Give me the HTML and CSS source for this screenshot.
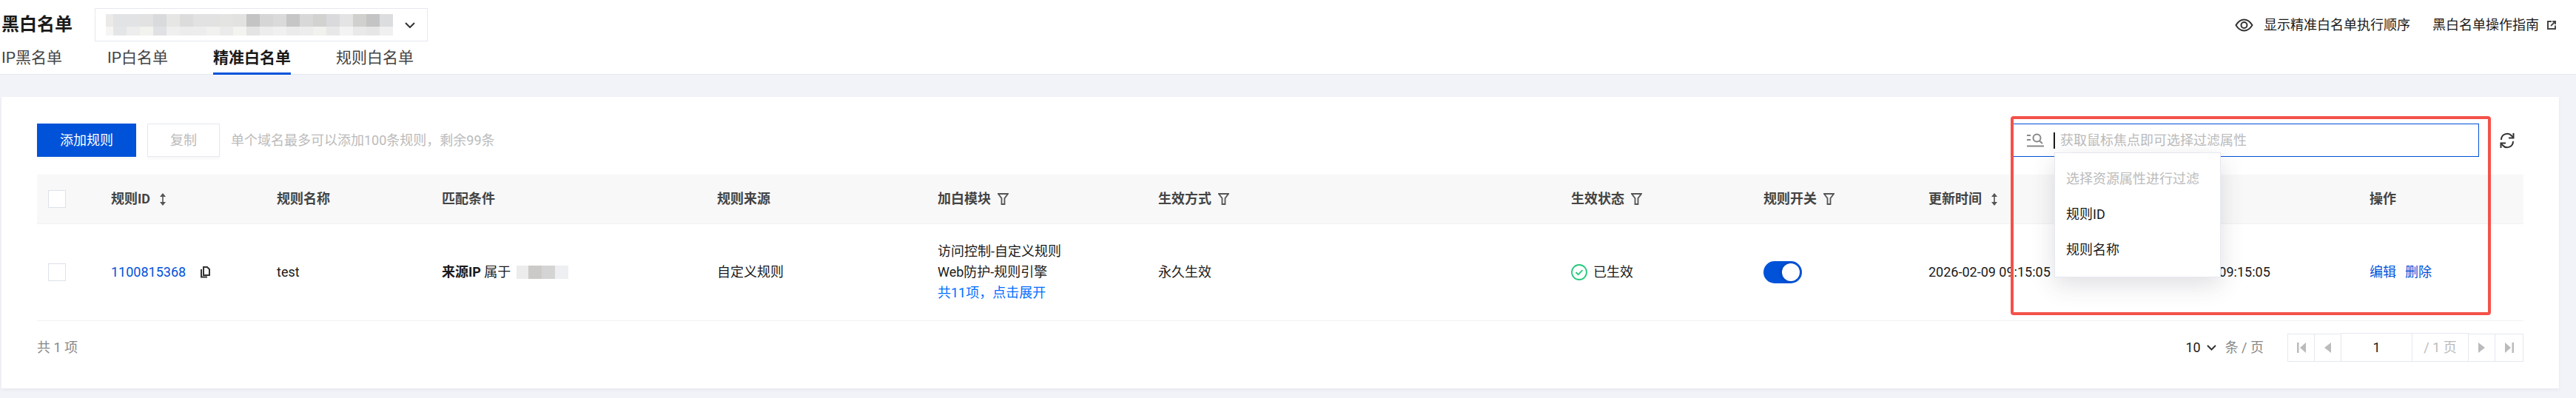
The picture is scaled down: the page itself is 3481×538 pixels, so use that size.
FILE: index.html
```html
<!DOCTYPE html>
<html lang="zh-CN">
<head>
  <meta charset="UTF-8">
  <meta name="viewport" content="width=device-width, initial-scale=1.0">
  <title>黑白名单</title>
  <link rel="stylesheet" href="styles.css">
</head>
<body>
  <header class="page-head">
    <div class="head-left">
      <div class="title-row">
        <h1 class="page-title">黑白名单</h1>
        <div class="domain-select">
          <svg class="mosaic" width="388" height="29" viewBox="0 0 388 29">
            <g shape-rendering="crispEdges">
              <rect x="0" y="0" width="10" height="17" fill="#ebeae8"/><rect x="10" y="0" width="18" height="17" fill="#e2e3e5"/><rect x="28" y="0" width="18" height="17" fill="#e2e3e5"/><rect x="46" y="0" width="18" height="17" fill="#e2e2e3"/><rect x="64" y="0" width="18" height="17" fill="#d9dadc"/><rect x="82" y="0" width="18" height="17" fill="#e6e6e4"/><rect x="100" y="0" width="18" height="17" fill="#dcdcdc"/><rect x="118" y="0" width="18" height="17" fill="#e2e2e2"/><rect x="136" y="0" width="18" height="17" fill="#e2e2e2"/><rect x="154" y="0" width="18" height="17" fill="#e4e4e3"/><rect x="172" y="0" width="18" height="17" fill="#e2e2e0"/><rect x="190" y="0" width="18" height="17" fill="#c4c4c4"/><rect x="208" y="0" width="18" height="17" fill="#d6d6d6"/><rect x="226" y="0" width="18" height="17" fill="#dadada"/><rect x="244" y="0" width="18" height="17" fill="#c6c6c6"/><rect x="262" y="0" width="18" height="17" fill="#d8d8d8"/><rect x="280" y="0" width="18" height="17" fill="#d2d2d0"/><rect x="298" y="0" width="18" height="17" fill="#dadadd"/><rect x="316" y="0" width="18" height="17" fill="#e4e4e4"/><rect x="334" y="0" width="18" height="17" fill="#d0d0ce"/><rect x="352" y="0" width="18" height="17" fill="#c4c4c4"/><rect x="370" y="0" width="18" height="17" fill="#dcdddf"/>
              <rect x="0" y="17" width="10" height="12" fill="#f6f5f3"/><rect x="10" y="17" width="18" height="12" fill="#e4e5e7"/><rect x="28" y="17" width="18" height="12" fill="#ecedec"/><rect x="46" y="17" width="18" height="12" fill="#f2f2ef"/><rect x="64" y="17" width="18" height="12" fill="#e0e1e4"/><rect x="82" y="17" width="18" height="12" fill="#efefef"/><rect x="100" y="17" width="18" height="12" fill="#ececec"/><rect x="118" y="17" width="18" height="12" fill="#ededed"/><rect x="136" y="17" width="18" height="12" fill="#f1f1f0"/><rect x="154" y="17" width="18" height="12" fill="#ebebeb"/><rect x="172" y="17" width="18" height="12" fill="#f3f3f0"/><rect x="190" y="17" width="18" height="12" fill="#e4e4e4"/><rect x="208" y="17" width="18" height="12" fill="#ededed"/><rect x="226" y="17" width="18" height="12" fill="#f0f0f0"/><rect x="244" y="17" width="18" height="12" fill="#ebebeb"/><rect x="262" y="17" width="18" height="12" fill="#ededed"/><rect x="280" y="17" width="18" height="12" fill="#f1f1ee"/><rect x="298" y="17" width="18" height="12" fill="#e8e8e9"/><rect x="316" y="17" width="18" height="12" fill="#f3f3f3"/><rect x="334" y="17" width="18" height="12" fill="#e9e9e9"/><rect x="352" y="17" width="18" height="12" fill="#e6e6e6"/><rect x="370" y="17" width="18" height="12" fill="#f0f0f0"/>
            </g>
          </svg>
          <svg class="chevron" width="14" height="8" viewBox="0 0 14 8"><path d="M1 1l6 6 6-6" fill="none" stroke="#333" stroke-width="2"/></svg>
        </div>
      </div>
      <nav class="tabs">
        <a class="tab">IP黑名单</a>
        <a class="tab">IP白名单</a>
        <a class="tab active">精准白名单</a>
        <a class="tab">规则白名单</a>
      </nav>
    </div>
    <div class="head-actions">
      <span class="head-link">
        <svg class="eye-icon" width="25" height="18" viewBox="0 0 25 18"><path d="M1.5 9C4.5 4 8 1.5 12.5 1.5S20.500 4 23.500 9c-3 5-6.500 7.500-11 7.500S4.500 14 1.500 9z" fill="none" stroke="#333" stroke-width="2"/><circle cx="12.500" cy="9" r="4" fill="none" stroke="#333" stroke-width="2"/></svg>
        显示精准白名单执行顺序
      </span>
      <span class="head-link guide-link">
        黑白名单操作指南
        <svg width="12" height="12" viewBox="0 0 12 12"><path d="M6 1H1v10h10V6.500" fill="none" stroke="#444" stroke-width="2"/><path d="M5 7l6-6M7 .8h4.200V5" fill="none" stroke="#444" stroke-width="1.800"/></svg>
      </span>
    </div>
  </header>

  <main class="card">
    <div class="toolbar">
      <button class="btn btn-primary">添加规则</button>
      <button class="btn btn-disabled">复制</button>
      <span class="hint">单个域名最多可以添加100条规则，剩余99条</span>
      <div class="search-box">
        <svg class="search-icon" width="23" height="19" viewBox="0 0 23 19">
          <path d="M0 3h5M0 9h5M0 17.500h23" fill="none" stroke="#888" stroke-width="2"/>
          <circle cx="13.500" cy="6.500" r="5" fill="none" stroke="#888" stroke-width="2"/>
          <path d="M17 10.500l4 3.500" fill="none" stroke="#888" stroke-width="2"/>
        </svg>
        <span class="caret"></span>
        <span class="placeholder">获取鼠标焦点即可选择过滤属性</span>
        <ul class="search-menu">
          <li class="menu-title">选择资源属性进行过滤</li>
          <li>规则ID</li>
          <li>规则名称</li>
        </ul>
      </div>
      <svg class="refresh-icon" width="22" height="22" viewBox="0 0 22 22">
        <path d="M3 10a8 8 0 0 1 14-5.500L19 7M19 12a8 8 0 0 1-14 5.500L3 15" fill="none" stroke="#333" stroke-width="2"/>
        <path d="M19.500 1v6.500H13M2.500 21v-6.500H9" fill="none" stroke="#333" stroke-width="2"/>
      </svg>
    </div>

    <div class="rule-table">
      <div class="table-row table-head">
        <div class="cell check-cell"><span class="checkbox"></span></div>
        <div class="cell">规则ID
          <svg class="sort-icon" width="8" height="17" viewBox="0 0 8 17"><path d="M4 0l4 5H0zM4 17l4-5H0z" fill="#555"/><path d="M4 4v9" stroke="#555" stroke-width="1.600"/></svg>
        </div>
        <div class="cell">规则名称</div>
        <div class="cell">匹配条件</div>
        <div class="cell">规则来源</div>
        <div class="cell">加白模块
          <svg class="filter-icon" width="15" height="16" viewBox="0 0 15 16"><path d="M1 1h13L9.500 7v8h-4V7z" fill="none" stroke="#555" stroke-width="1.800"/></svg>
        </div>
        <div class="cell">生效方式
          <svg class="filter-icon" width="15" height="16" viewBox="0 0 15 16"><path d="M1 1h13L9.500 7v8h-4V7z" fill="none" stroke="#555" stroke-width="1.800"/></svg>
        </div>
        <div class="cell">生效状态
          <svg class="filter-icon" width="15" height="16" viewBox="0 0 15 16"><path d="M1 1h13L9.500 7v8h-4V7z" fill="none" stroke="#555" stroke-width="1.800"/></svg>
        </div>
        <div class="cell">规则开关
          <svg class="filter-icon" width="15" height="16" viewBox="0 0 15 16"><path d="M1 1h13L9.500 7v8h-4V7z" fill="none" stroke="#555" stroke-width="1.800"/></svg>
        </div>
        <div class="cell">更新时间
          <svg class="sort-icon" width="8" height="17" viewBox="0 0 8 17"><path d="M4 0l4 5H0zM4 17l4-5H0z" fill="#555"/><path d="M4 4v9" stroke="#555" stroke-width="1.600"/></svg>
        </div>
        <div class="cell">创建时间</div>
        <div class="cell">操作</div>
      </div>

      <div class="table-row table-body">
        <div class="cell check-cell"><span class="checkbox"></span></div>
        <div class="cell">
          <a class="link">1100815368</a>
          <svg class="copy-icon" width="15" height="16" viewBox="0 0 15 16"><path d="M6 1h5l3 3v8H6z" fill="none" stroke="#333" stroke-width="2"/><path d="M3 4v10.500h8" fill="none" stroke="#333" stroke-width="2"/></svg>
        </div>
        <div class="cell">test</div>
        <div class="cell">
          <b class="cond-key">来源IP</b>&nbsp;属于&nbsp;<svg class="mosaic-ip" width="70" height="18" viewBox="0 0 70 18"><g shape-rendering="crispEdges"><rect x="0" y="0" width="16" height="18" fill="#ececec"/><rect x="16" y="0" width="18" height="18" fill="#cccac8"/><rect x="34" y="0" width="18" height="18" fill="#d4d4d4"/><rect x="52" y="0" width="18" height="18" fill="#eeeff2"/></g></svg>
        </div>
        <div class="cell">自定义规则</div>
        <div class="cell module-cell">
          <div>访问控制-自定义规则</div>
          <div>Web防护-规则引擎</div>
          <a class="link-bright">共11项，点击展开</a>
        </div>
        <div class="cell">永久生效</div>
        <div class="cell status-cell">
          <svg width="22" height="22" viewBox="0 0 22 22"><circle cx="11" cy="11" r="10" fill="none" stroke="#29c97f" stroke-width="1.800"/><path d="M6.500 11l3.200 3.200 5.800-6" fill="none" stroke="#29c97f" stroke-width="1.800"/></svg>
          已生效
        </div>
        <div class="cell"><span class="switch"><span class="switch-knob"></span></span></div>
        <div class="cell">2026-02-09 09:15:05</div>
        <div class="cell">2026-02-09 09:15:05</div>
        <div class="cell ops-cell"><a class="link">编辑</a><a class="link">删除</a></div>
      </div>
    </div>

    <footer class="table-foot">
      <span class="total">共 1 项</span>
      <div class="page-size">
        <span class="size-value">10</span>
        <svg width="13" height="8" viewBox="0 0 13 8"><path d="M1 1l5.500 5.500L12 1" fill="none" stroke="#333" stroke-width="2"/></svg>
        <span class="size-unit">条 / 页</span>
      </div>
      <div class="pager">
        <span class="pager-btn"><svg width="12" height="14" viewBox="0 0 12 14"><path d="M0 0h2.500v14H0zM12 0v14L4 7z" fill="#bbb"/></svg></span>
        <span class="pager-btn"><svg width="9" height="14" viewBox="0 0 9 14"><path d="M9 0v14L0 7z" fill="#bbb"/></svg></span>
        <span class="pager-input">1</span>
        <span class="pager-total">/ 1 页</span>
        <span class="pager-btn"><svg width="9" height="14" viewBox="0 0 9 14"><path d="M0 0v14l9-7z" fill="#bbb"/></svg></span>
        <span class="pager-btn"><svg width="12" height="14" viewBox="0 0 12 14"><path d="M12 0H9.500v14H12zM0 0v14l8-7z" fill="#bbb"/></svg></span>
      </div>
    </footer>

    <div class="annotation"></div>
  </main>
</body>
</html>
```

FILE: styles.css
```css
* {
  box-sizing: border-box;
}
html, body {
  margin: 0;
  height: 538px;
  overflow: hidden;
}
body {
  font-family: Roboto, "Noto Sans CJK SC", sans-serif;
  font-size: 18px;
  line-height: 28px;
  color: #1a1a1a;
  background-color: #f2f3f8;
}
svg {
  display: block;
  flex: none;
}

/* top bar */
.page-head {
  display: flex;
  justify-content: space-between;
  height: 101px;
  padding: 0 27px 0 2px;
  background: #fff;
  border-bottom: 1px solid #e5e8f0;
}
.title-row {
  display: flex;
  align-items: center;
  padding-top: 11px;
}
.page-title {
  margin: 0;
  width: 126px;
  font-size: 24px;
  line-height: 45px;
  font-weight: 700;
}
.domain-select {
  display: flex;
  align-items: center;
  width: 450px;
  height: 45px;
  padding-left: 14px;
  border: 1px solid #e5e8f0;
}
.chevron {
  margin-left: 16px;
}
.tabs {
  display: flex;
  gap: 61px;
  margin-top: 1px;
}
.tab {
  height: 44px;
  padding-top: 6px;
  font-size: 21px;
  line-height: 30px;
  color: #444;
}
.tab.active {
  color: #1a1a1a;
  font-weight: 700;
  border-bottom: 3px solid #0052d9;
}
.head-actions {
  display: flex;
  align-items: flex-start;
  gap: 30px;
  padding-top: 20px;
}
.head-link {
  display: flex;
  align-items: center;
  gap: 14px;
  white-space: nowrap;
}
.guide-link {
  gap: 11px;
}

/* card */
.card {
  position: relative;
  height: 394px;
  margin: 30px 23px 0 2px;
  padding: 36px 48px 0;
  background: #fff;
  box-shadow: 0 2px 4px rgba(54, 58, 80, 0.06);
}
.toolbar {
  display: flex;
  align-items: center;
  gap: 15px;
  height: 45px;
}
.btn {
  height: 45px;
  padding: 0;
  font: inherit;
  border: 1px solid transparent;
  box-shadow: 0 3px 3px rgba(0, 0, 0, 0.03);
}
.btn-primary {
  width: 134px;
  color: #fff;
  background: #0052d9;
}
.btn-disabled {
  width: 98px;
  color: #bbb;
  background: #fff;
  border-color: #e5e8f0;
}
.hint {
  color: #bbb;
}
.search-box {
  position: relative;
  display: flex;
  align-items: center;
  width: 630px;
  height: 45px;
  margin-left: auto;
  padding-left: 18px;
  border: 1.5px solid #0052d9;
}
.caret {
  width: 2px;
  height: 22px;
  margin: 0 7px 0 13px;
  background: #1a1a1a;
}
.placeholder {
  color: #bbb;
}
.search-menu {
  position: absolute;
  z-index: 2;
  top: 38px;
  left: 55px;
  width: 225px;
  height: 169px;
  margin: 0;
  padding: 11px 0 0 15px;
  list-style: none;
  background: #fff;
  border: 1px solid #e5e8f0;
  box-shadow: 0 10px 30px rgba(54, 58, 80, 0.16);
}
.search-menu li {
  height: 48px;
  line-height: 48px;
}
.search-menu .menu-title {
  color: #bbb;
}
.refresh-icon {
  margin: 0 11px 0 12px;
}

/* table */
.rule-table {
  margin-top: 24px;
}
.table-row {
  display: grid;
  grid-template-columns: 100px 224px 223px 372px 298px 298px 558px 260px 223px 297px 299px 208px;
  border-bottom: 1px solid #f2f2f2;
}
.table-head {
  height: 67px;
  font-weight: 700;
  color: #444;
  background: #f8f8f8;
}
.table-body {
  height: 131px;
}
.cell {
  display: flex;
  align-items: center;
  white-space: nowrap;
}
.check-cell {
  padding-left: 15px;
}
.checkbox {
  width: 24px;
  height: 24px;
  background: #fff;
  border: 1px solid #dde1ea;
}
.sort-icon {
  margin-left: 13px;
}
.filter-icon {
  margin-left: 9px;
}
.link {
  color: #0052d9;
}
.link-bright {
  color: #006eff;
}
.copy-icon {
  margin-left: 18px;
}
.cond-key {
  font-weight: 700;
}
.mosaic-ip {
  margin-left: 3px;
}
.module-cell {
  display: block;
  padding-top: 23px;
}
.status-cell {
  gap: 8px;
}
.switch {
  display: flex;
  align-items: center;
  justify-content: flex-end;
  width: 52px;
  height: 30px;
  padding-right: 3px;
  background: #0052d9;
  border-radius: 15px;
}
.switch-knob {
  width: 24px;
  height: 24px;
  background: #fff;
  border-radius: 50%;
  box-shadow: -2px 0 4px rgba(0, 0, 0, 0.2);
}
.ops-cell {
  gap: 12px;
}

/* footer */
.table-foot {
  display: flex;
  align-items: center;
  height: 38px;
  margin-top: 17px;
}
.total {
  color: #888;
}
.page-size {
  display: flex;
  align-items: center;
  margin-left: auto;
  margin-right: 32px;
}
.page-size svg {
  margin: 0 12px 0 8px;
}
.size-unit {
  color: #888;
}
.pager {
  display: flex;
  height: 38px;
}
.pager-btn {
  display: flex;
  align-items: center;
  justify-content: center;
  width: 37px;
  margin-right: -1px;
  border: 1px solid #e5e8f0;
}
.pager-btn:last-child {
  width: 39px;
  margin-right: 0;
}
.pager-input {
  width: 97px;
  margin: -1px -1px 0 0;
  text-align: center;
  line-height: 37px;
  border: 1px solid #e5e8f0;
}
.pager-total {
  width: 77px;
  margin: -1px -1px 0 0;
  text-align: center;
  line-height: 37px;
  color: #bbb;
  border: 1px solid #e5e8f0;
}

/* red marker drawn over the screenshot */
.annotation {
  position: absolute;
  z-index: 3;
  top: 26px;
  left: 2715px;
  width: 649px;
  height: 269px;
  border: 4px solid #f4514a;
  border-radius: 4px;
  pointer-events: none;
}
```
